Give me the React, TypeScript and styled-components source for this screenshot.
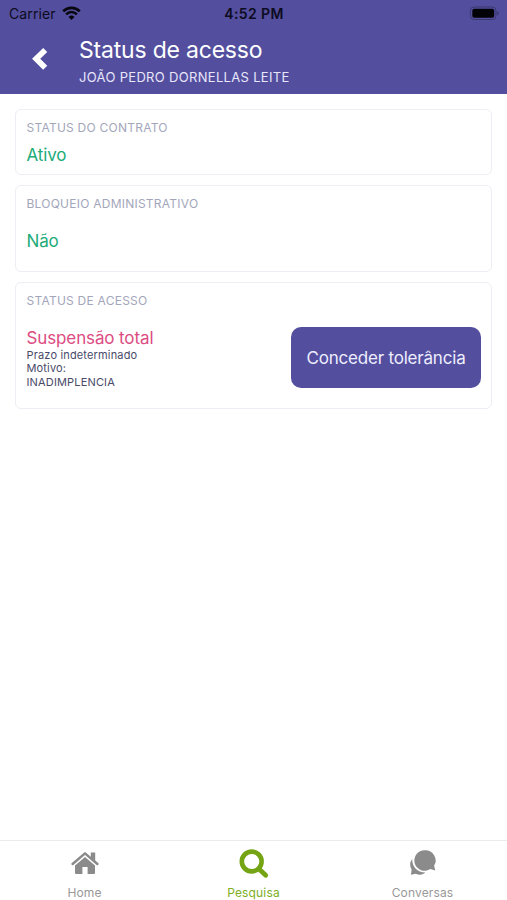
import React from "react";
import styled, { createGlobalStyle } from "styled-components";

const purple = "#534f9e";

const GlobalStyle = createGlobalStyle`
  * { box-sizing: border-box; }
  body { margin: 0; background: #fff; }
`;

const Screen = styled.div`
  width: 100%;
  height: 100vh;
  display: flex;
  flex-direction: column;
  overflow: hidden;
  background: #fff;
  font-family: Inter, "Liberation Sans", sans-serif;
`;

const Header = styled.header`
  height: 94px;
  background: ${purple};
`;

const StatusBar = styled.div`
  height: 27px;
  padding: 0 8px 0 9px;
  display: grid;
  grid-template-columns: 1fr auto 1fr;
  align-items: center;
  color: #0d0b20;
  font-size: 14px;
  line-height: 27px;
`;

const Carrier = styled.span`
  display: flex;
  align-items: center;
  gap: 6px;
  letter-spacing: 0.1px;
`;

const Clock = styled.span`
  font-weight: 600;
  letter-spacing: 0.4px;
`;

const BatteryIcon = styled.svg`
  justify-self: end;
  display: block;
`;

const TitleRow = styled.div`
  display: flex;
  height: 67px;
`;

const BackButton = styled.button`
  width: 79px;
  padding: 19px 0 0 31px;
  border: 0;
  background: none;
  display: flex;
  align-items: flex-start;
`;

const Heading = styled.div`
  padding-top: 9px;
  color: #fff;
`;

const Title = styled.h1`
  margin: 0;
  font-size: 23px;
  line-height: 28px;
  font-weight: 400;
  letter-spacing: -0.2px;
  white-space: nowrap;
`;

const Subtitle = styled.div`
  margin-top: 5px;
  font-size: 13px;
  line-height: 16px;
  letter-spacing: 0.32px;
  color: #e8e6fa;
  white-space: nowrap;
`;

const Content = styled.main`
  flex: 1;
  padding: 15px 15px 0;
  display: flex;
  flex-direction: column;
  gap: 10px;
`;

const Card = styled.section<{ $height: number; $top?: number }>`
  height: ${(p) => p.$height}px;
  padding: ${(p) => p.$top ?? 10}px 10px 0 10.5px;
  border: 1.5px solid #edeef3;
  border-radius: 6px;
`;

const Label = styled.h2`
  margin: 0;
  font-size: 12px;
  line-height: 16px;
  font-weight: 400;
  letter-spacing: 0.24px;
  color: #a3a6bb;
`;

const Value = styled.div<{ $tone: "ok" | "alert"; $top?: number }>`
  margin-top: ${(p) => p.$top ?? 0}px;
  font-size: 17px;
  line-height: 20px;
  letter-spacing: -0.12px;
  color: ${(p) => (p.$tone === "ok" ? "#20ab78" : "#dc4b82")};
`;

const AccessRow = styled.div`
  display: flex;
  justify-content: space-between;
  margin-top: 18px;
`;

const AccessInfo = styled.div`
  padding-top: 1px;
`;

const Details = styled.div`
  margin-top: 1px;
  font-size: 11px;
  line-height: 13.3px;
  letter-spacing: 0.16px;
  color: #494b69;
`;

const ActionButton = styled.button`
  width: 190px;
  height: 61px;
  padding: 0;
  border: 0;
  border-radius: 10px;
  background: ${purple};
  color: #eeedff;
  font: 400 17px/20px Inter, "Liberation Sans", sans-serif;
  letter-spacing: -0.2px;
  white-space: nowrap;
`;

const TabBar = styled.nav`
  height: 60px;
  border-top: 1px solid #ebebeb;
  display: grid;
  grid-template-columns: repeat(3, 1fr);
`;

const Tab = styled.a<{ $active?: boolean }>`
  display: flex;
  flex-direction: column;
  align-items: center;
  color: ${(p) => (p.$active ? "#74a414" : "#8b8b8b")};
`;

const TabIcon = styled.svg`
  width: 32px;
  height: 32px;
  margin-top: 7px;
`;

const TabLabel = styled.span<{ $active?: boolean }>`
  margin-top: 5px;
  font-size: 12px;
  line-height: 16px;
  letter-spacing: 0.15px;
  color: ${(p) => (p.$active ? "#7eae24" : "#999")};
`;

export default function App() {
  return (
    <Screen>
      <GlobalStyle />
      <Header>
        <StatusBar>
          <Carrier>
            Carrier
            <svg width="19" height="15" viewBox="0 0 19 15" fill="none" stroke="#08070f">
              <path d="M1.2 5.3a11.8 11.8 0 0 1 16.6 0" strokeWidth="2.7" />
              <path d="M4.1 8.3a7.7 7.7 0 0 1 10.8 0" strokeWidth="2.5" />
              <path d="M6.5 10.9a4 4 0 0 1 6 0L9.5 14z" fill="#08070f" stroke="none" />
            </svg>
          </Carrier>
          <Clock>4:52 PM</Clock>
          <BatteryIcon width="30" height="15" viewBox="0 0 30 15">
            <rect x="1.3" y="1" width="25.7" height="12.5" rx="3.8" fill="none" stroke="#3c376f" />
            <rect x="3.3" y="2.8" width="21.9" height="9" rx="2" fill="#030207" />
            <path d="M28.3 5.3v4c2-.8 2-3.2 0-4z" fill="#3c376f" />
          </BatteryIcon>
        </StatusBar>
        <TitleRow>
          <BackButton aria-label="Voltar">
            <svg width="19" height="26" viewBox="0 0 19 26" fill="none">
              <path d="M14.2 4L5.2 12.800l9 9" stroke="#fff" strokeWidth="5.800" />
            </svg>
          </BackButton>
          <Heading>
            <Title>Status de acesso</Title>
            <Subtitle>JOÃO PEDRO DORNELLAS LEITE</Subtitle>
          </Heading>
        </TitleRow>
      </Header>
      <Content>
        <Card $height={66}>
          <Label>STATUS DO CONTRATO</Label>
          <Value $tone="ok" $top={9}>Ativo</Value>
        </Card>
        <Card $height={87}>
          <Label>BLOQUEIO ADMINISTRATIVO</Label>
          <Value $tone="ok" $top={19}>Não</Value>
        </Card>
        <Card $height={127}>
          <Label>STATUS DE ACESSO</Label>
          <AccessRow>
            <AccessInfo>
              <Value $tone="alert">Suspensão total</Value>
              <Details>
                Prazo indeterminado
                <br />
                Motivo:
                <br />
                INADIMPLENCIA
              </Details>
            </AccessInfo>
            <ActionButton>Conceder tolerância</ActionButton>
          </AccessRow>
        </Card>
      </Content>
      <TabBar>
        <Tab>
          <TabIcon viewBox="0 0 32 32" fill="currentColor">
            <path d="M3.6 16L16 5.4 28.400 16" fill="none" stroke="currentColor" strokeWidth="2.5" strokeLinecap="round" strokeLinejoin="round" />
            <path d="M21.8 4.5h4.4v9l-4.4-3.8z" />
            <path d="M16 8.9l10 8.5V25q0 1-1 1h-6.400v-7h-5.200v7H7q-1 0-1-1v-7.600z" />
          </TabIcon>
          <TabLabel>Home</TabLabel>
        </Tab>
        <Tab $active>
          <TabIcon viewBox="0 0 32 32" fill="none" stroke="currentColor">
            <circle cx="13.7" cy="13.5" r="9.9" strokeWidth="4.600" />
            <path d="M21.300 21.200l6.400 6.100" strokeWidth="4.800" strokeLinecap="round" />
          </TabIcon>
          <TabLabel $active>Pesquisa</TabLabel>
        </Tab>
        <Tab>
          <TabIcon viewBox="0 0 32 32" fill="currentColor">
            <path d="M5.2 11A9.500 9.500 0 0 0 4.600 21.500L4 26.800l4.700-1c3.700 1.500 7.500 1 9.500-1.200C10.500 24.500 5 19 5.200 11z" />
            <path d="M17.700 2.200a10.300 10.300 0 1 0 5.600 18.900l5 1.500-1.200-4.800A10.300 10.300 0 0 0 17.700 2.200z" />
          </TabIcon>
          <TabLabel>Conversas</TabLabel>
        </Tab>
      </TabBar>
    </Screen>
  );
}
